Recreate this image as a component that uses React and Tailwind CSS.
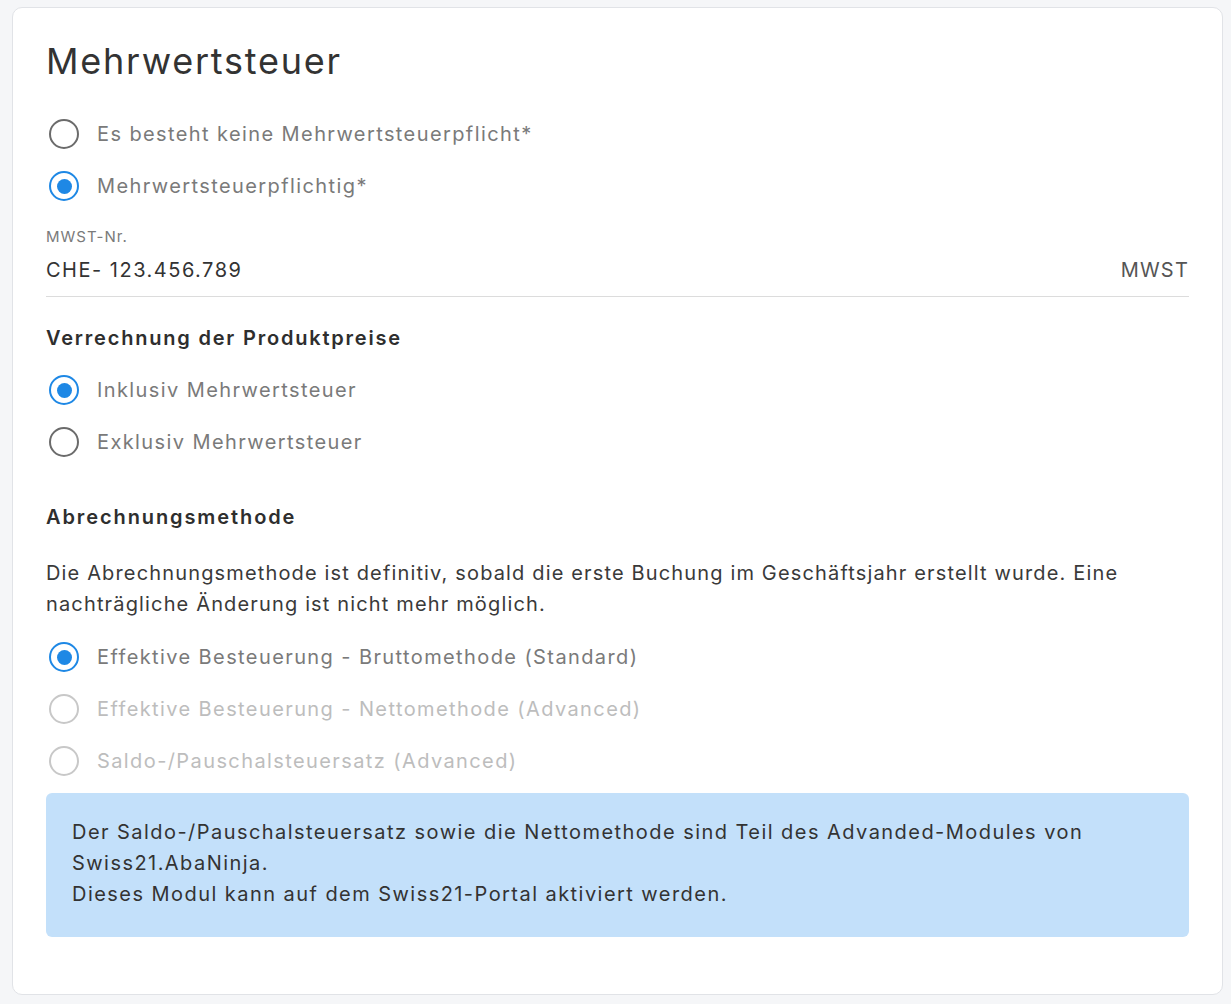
import React from "react";

function Radio({ checked, disabled, label }) {
  return (
    <div className="flex h-[52px] items-center">
      <div className="ml-[3px] flex h-[30px] w-[30px] shrink-0 items-center justify-center">
        {checked ? (
          <div className="flex h-[30px] w-[30px] items-center justify-center rounded-full border-[2.5px] border-[#1e88e5]">
            <div className="h-[15px] w-[15px] rounded-full bg-[#1e88e5]" />
          </div>
        ) : (
          <div
            className={
              disabled
                ? "h-[30px] w-[30px] rounded-full border-[2.5px] border-[#c8c8c8]"
                : "h-[30px] w-[30px] rounded-full border-[2.5px] border-[#6b6b6b]"
            }
          />
        )}
      </div>
      <span
        className={
          disabled
            ? "ml-[18px] text-[20px] leading-[28px] tracking-[1.4px] text-[#bdbdbd]"
            : "ml-[18px] text-[20px] leading-[28px] tracking-[1.4px] text-[#7a7a7a]"
        }
      >
        {label}
      </span>
    </div>
  );
}

export default function App() {
  return (
    <div
      className="min-h-[1004px] bg-[#f5f6f8] px-[12px] pt-[7px] pb-[9px]"
      style={{ fontFamily: "Inter, 'Noto Sans', sans-serif" }}
    >
      <div className="flex w-[1211px] flex-col rounded-[10px] border border-[#e1e3e7] bg-white px-[33px] pt-[31px] pb-[57px]">
        <h1 className="text-[36px] leading-[44px] tracking-[1.75px] text-[#333333]">Mehrwertsteuer</h1>

        <div className="mt-[25px] flex flex-col">
          <Radio label="Es besteht keine Mehrwertsteuerpflicht*" />
          <Radio checked label="Mehrwertsteuerpflichtig*" />
        </div>

        <div className="mt-[15px] text-[15px] leading-[20px] tracking-[1px] text-[#7a7a7a]">MWST-Nr.</div>
        <div className="mt-[9px] flex items-center justify-between border-b border-[#dcdcdc] pb-[12px]">
          <span className="text-[20px] leading-[28px] tracking-[1.5px] text-[#333333]">CHE- 123.456.789</span>
          <span className="text-[20px] leading-[28px] tracking-[1.2px] text-[#555555]">MWST</span>
        </div>

        <h2 className="mt-[27px] text-[20px] font-semibold leading-[28px] tracking-[1.8px] text-[#2e2e2e]">
          Verrechnung der Produktpreise
        </h2>
        <div className="mt-[12px] flex flex-col">
          <Radio checked label="Inklusiv Mehrwertsteuer" />
          <Radio label="Exklusiv Mehrwertsteuer" />
        </div>

        <h2 className="mt-[35px] text-[20px] font-semibold leading-[28px] tracking-[1.9px] text-[#2e2e2e]">
          Abrechnungsmethode
        </h2>
        <p className="mt-[27px] text-[20px] leading-[31px] tracking-[1.15px] text-[#3a3a3a]">
          Die Abrechnungsmethode ist definitiv, sobald die erste Buchung im Geschäftsjahr erstellt wurde. Eine nachträgliche Änderung ist nicht mehr möglich.
        </p>
        <div className="mt-[11px] flex flex-col">
          <Radio checked label="Effektive Besteuerung - Bruttomethode (Standard)" />
          <Radio disabled label="Effektive Besteuerung - Nettomethode (Advanced)" />
          <Radio disabled label="Saldo-/Pauschalsteuersatz (Advanced)" />
        </div>

        <div className="mt-[6px] rounded-[6px] bg-[#c3e0fa] px-[26px] pt-[24px] pb-[27px] text-[20px] leading-[31px] tracking-[1.45px] text-[#333333]">
          <p>Der Saldo-/Pauschalsteuersatz sowie die Nettomethode sind Teil des Advanded-Modules von Swiss21.AbaNinja.</p>
          <p>Dieses Modul kann auf dem Swiss21-Portal aktiviert werden.</p>
        </div>
      </div>
    </div>
  );
}
